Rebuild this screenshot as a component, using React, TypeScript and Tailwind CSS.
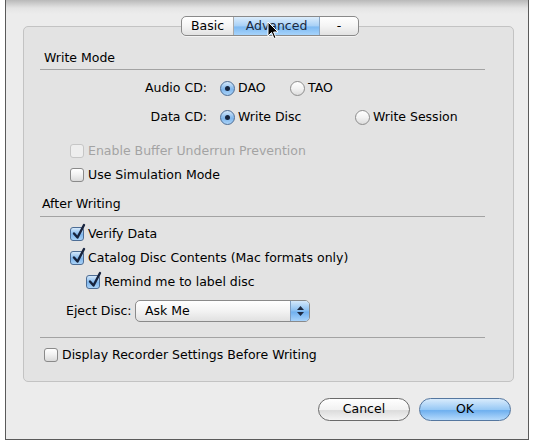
import type { ReactNode } from "react";

function Radio({ on }: { on?: boolean }) {
  return (
    <span
      className={
        "relative flex h-[15px] w-[15px] shrink-0 items-center justify-center rounded-full border " +
        (on
          ? "border-[#4d6d95] bg-[linear-gradient(to_bottom,#d5e8fa,#7fb6ec_55%,#a9d2f7)]"
          : "border-[#8d8d8d] bg-[linear-gradient(to_bottom,#ffffff,#f2f2f2_50%,#dcdcdc)]")
      }
    >
      {on && <span className="h-[5px] w-[5px] rounded-full bg-[#16243d]" />}
    </span>
  );
}

function Check({ on, disabled }: { on?: boolean; disabled?: boolean }) {
  let cls = "border-[#8a8a8a] bg-[linear-gradient(to_bottom,#ffffff,#f0f0f0_50%,#dadada)]";
  if (on) cls = "border-[#4d6d95] bg-[linear-gradient(to_bottom,#d5e8fa,#7fb6ec_55%,#a9d2f7)]";
  if (disabled) cls = "border-[#c6c6c6] bg-[#eeeeee]";
  return (
    <span className={"relative block h-[14px] w-[14px] shrink-0 rounded-[3px] border " + cls}>
      {on && (
        <svg width="16" height="17" viewBox="0 0 16 17" className="absolute left-[0px] top-[-5px] overflow-visible">
          <path d="M3 10.5 L6.5 14.5 L13 2" fill="none" stroke="#17233d" strokeWidth="2.4" strokeLinecap="round" strokeLinejoin="round" />
        </svg>
      )}
    </span>
  );
}

function CheckRow({ on, disabled, indent, children, mt }: { on?: boolean; disabled?: boolean; indent: string; children: ReactNode; mt: string }) {
  return (
    <div className={"flex h-[18px] items-center gap-[4px] " + indent + " " + mt}>
      <Check on={on} disabled={disabled} />
      <span className={disabled ? "text-[#a3a3a3]" : ""}>{children}</span>
    </div>
  );
}

function Separator({ mt }: { mt: string }) {
  return <div className={"ml-[16px] h-px w-[445px] bg-[#a3a3a3] " + mt} />;
}

function Cursor() {
  return (
    <svg width="12" height="19" viewBox="0 0 12 19" className="absolute left-[261px] top-[21px] z-20">
      <path d="M1 1 L1 15 L4.5 11.5 L7 17.5 L9 16.6 L6.6 11 L11 11 Z" fill="#000" stroke="#fff" strokeWidth="1" strokeLinejoin="round" />
    </svg>
  );
}

export default function App() {
  return (
    <div className="h-[441px] w-[545px] bg-white font-['DejaVu_Sans',sans-serif] text-[12.5px] leading-none text-black">
      <div className="relative ml-[5px] flex h-[440px] w-[524px] flex-col border-x border-b border-[#5a5a5a] bg-[linear-gradient(to_bottom,#b9b9b9_0px,#e4e4e4_8px,#ececec_14px,#ececec)]">
        <div className="ml-[17px] mt-[16px] flex flex-col">
          {/* tabs */}
          <div className="relative z-10 -mb-[10px] ml-[158px] flex h-[20px] w-[178px] overflow-hidden rounded-[5px] border border-[#8a8a8a] bg-[linear-gradient(to_bottom,#ffffff,#f4f4f4_50%,#e2e2e2)] shadow-[0_1px_0_rgba(255,255,255,0.6)]">
            <div className="flex w-[52px] items-center justify-center border-r border-[#a9a9a9]">Basic</div>
            <div className="flex w-[86px] items-center justify-center border-r border-[#8aa6c4] bg-[linear-gradient(to_bottom,#dcedfc,#a7d0f6_50%,#7ebaf2_55%,#a6d3fb)] text-[#1b2a40]">
              Advanced
            </div>
            <div className="flex flex-1 items-center justify-center">-</div>
          </div>

          {/* group box */}
          <div className="flex h-[356px] w-[491px] flex-col rounded-[5px] border border-[#c3c3c3] bg-[#e3e3e3]">
            <div className="ml-[20px] mt-[22px] flex h-[18px] items-center">Write Mode</div>
            <Separator mt="mt-[2px]" />

            <div className="mt-[9px] flex h-[18px] items-center">
              <span className="w-[184px] pr-[1px] text-right">Audio CD:</span>
              <div className="ml-[12px] flex w-[70px] items-center gap-[3px]">
                <Radio on />
                <span>DAO</span>
              </div>
              <div className="flex items-center gap-[3px]">
                <Radio />
                <span>TAO</span>
              </div>
            </div>

            <div className="mt-[11px] flex h-[18px] items-center">
              <span className="w-[184px] pr-[1px] text-right">Data CD:</span>
              <div className="ml-[12px] flex w-[135px] items-center gap-[3px]">
                <Radio on />
                <span>Write Disc</span>
              </div>
              <div className="flex items-center gap-[3px]">
                <Radio />
                <span>Write Session</span>
              </div>
            </div>

            <CheckRow disabled indent="ml-[46px]" mt="mt-[16px]">
              Enable Buffer Underrun Prevention
            </CheckRow>
            <CheckRow indent="ml-[46px]" mt="mt-[6px]">
              Use Simulation Mode
            </CheckRow>

            <div className="ml-[18px] mt-[11px] flex h-[18px] items-center">After Writing</div>
            <Separator mt="mt-[3px]" />

            <CheckRow on indent="ml-[46px]" mt="mt-[8px]">
              Verify Data
            </CheckRow>
            <CheckRow on indent="ml-[46px]" mt="mt-[6px]">
              Catalog Disc Contents (Mac formats only)
            </CheckRow>
            <CheckRow on indent="ml-[62px]" mt="mt-[6px]">
              Remind me to label disc
            </CheckRow>

            <div className="ml-[42px] mt-[9px] flex h-[22px] items-center">
              <span className="w-[69px]">Eject Disc:</span>
              <div className="flex h-[22px] w-[175px] overflow-hidden rounded-[5px] border border-[#8a8a8a] bg-[linear-gradient(to_bottom,#ffffff,#f3f3f3_50%,#e1e1e1)]">
                <span className="flex flex-1 items-center pl-[9px]">Ask Me</span>
                <span className="flex w-[19px] flex-col items-center justify-center gap-[2px] border-l border-[#7d9dc2] bg-[linear-gradient(to_bottom,#d4e8fb,#86bdf1_50%,#70b0ef_55%,#a8d3fb)]">
                  <svg width="7" height="4" viewBox="0 0 7 4">
                    <path d="M3.5 0 L7 4 L0 4 Z" fill="#1d2a42" />
                  </svg>
                  <svg width="7" height="4" viewBox="0 0 7 4">
                    <path d="M0 0 L7 0 L3.5 4 Z" fill="#1d2a42" />
                  </svg>
                </span>
              </div>
            </div>

            <Separator mt="mt-[15px]" />

            <CheckRow indent="ml-[20px]" mt="mt-[8px]">
              Display Recorder Settings Before Writing
            </CheckRow>
          </div>
        </div>

        {/* buttons */}
        <div className="mt-[16px] flex justify-end gap-[9px] pr-[17px]">
          <button className="flex h-[23px] w-[92px] items-center justify-center rounded-full border border-[#6a6a6a] bg-[linear-gradient(to_bottom,#ffffff,#f2f2f2_50%,#dcdcdc_55%,#f4f4f4)] text-black">
            Cancel
          </button>
          <button className="flex h-[23px] w-[92px] items-center justify-center rounded-full border border-[#55779f] bg-[linear-gradient(to_bottom,#d8ebfc,#98c9f5_50%,#6fb0ef_55%,#b5dafc)] text-black">
            OK
          </button>
        </div>

        <Cursor />
      </div>
    </div>
  );
}
